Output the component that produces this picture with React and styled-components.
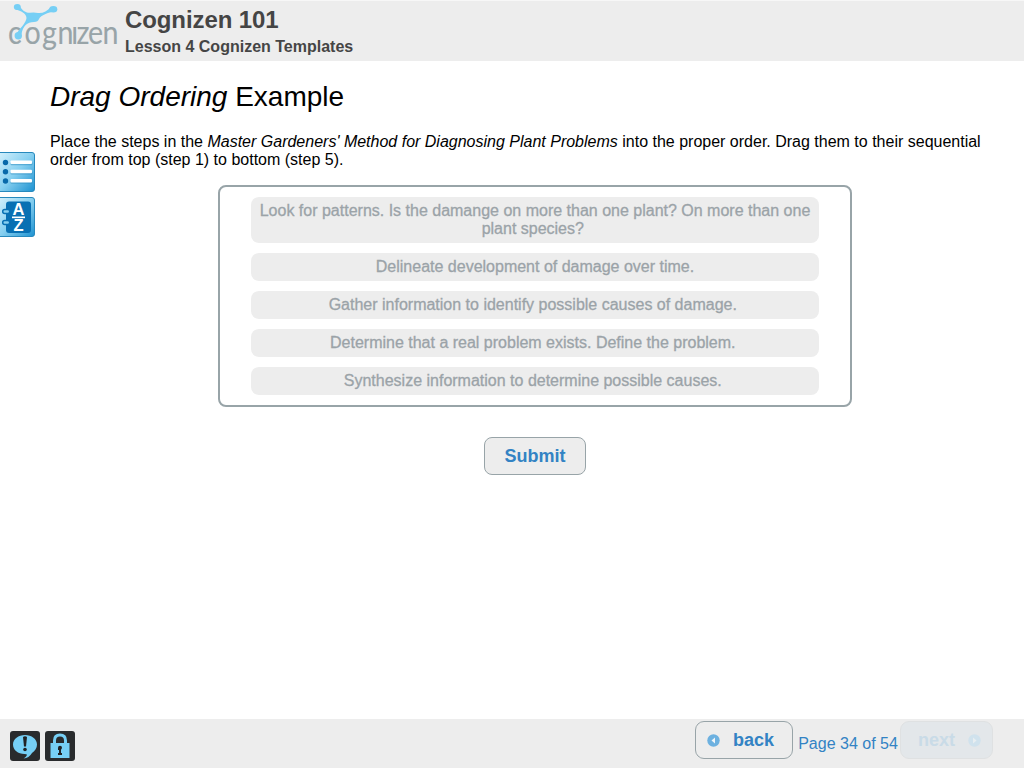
import React from "react";
import styled, { createGlobalStyle, css } from "styled-components";

const GlobalStyle = createGlobalStyle`
  * { box-sizing: border-box; }
  body { margin: 0; background: #fff; font-family: "Liberation Sans", Arial, sans-serif; }
`;

const Page = styled.div`
  width: 1024px;
  height: 768px;
  display: flex;
  flex-direction: column;
  overflow: hidden;
`;

const Header = styled.header`
  height: 61px;
  flex: none;
  display: flex;
  background: #ededed;
  border-top: 1px solid #f7f7f7;
  color: #454545;
`;

const Logo = styled.svg`
  width: 125px;
  height: 60px;
  flex: none;
  display: block;
  overflow: visible;
`;

const CourseTitle = styled.h1`
  margin: 4px 0 0;
  font-size: 24px;
  line-height: 29px;
  letter-spacing: -0.1px;
`;

const LessonTitle = styled.h2`
  margin: 4px 0 0;
  font-size: 16px;
  line-height: 18px;
`;

const Body = styled.div`
  flex: 1;
  display: flex;
  min-height: 0;
`;

const SideTabs = styled.nav`
  width: 50px;
  flex: none;
  padding-top: 91px;
  display: flex;
  flex-direction: column;
  gap: 5px;
`;

const TabIcon = styled.svg`
  width: 36px;
  height: 40px;
  display: block;
`;

const Content = styled.main`
  width: 970px;
  padding-right: 30px;
`;

const PageTitle = styled.h3`
  margin: 19px 0 0;
  font-size: 28px;
  font-weight: 400;
  line-height: 33px;
`;

const Instructions = styled.p`
  margin: 20px 0 0;
  font-size: 16px;
  line-height: 18px;
  white-space: nowrap;
`;

const Exercise = styled.section`
  width: 634px;
  margin: 16px 0 0 168px;
  display: flex;
  flex-direction: column;
  align-items: center;
  gap: 30px;
`;

const OrderList = styled.ul`
  width: 634px;
  height: 222px;
  margin: 0;
  padding: 10px 31px;
  list-style: none;
  display: flex;
  flex-direction: column;
  gap: 10px;
  border: 2px solid #98a4a8;
  border-radius: 8px;
`;

const Step = styled.li`
  padding: 5px 8px;
  border-radius: 8px;
  background: #ededed;
  color: #9ba3a8;
  font-size: 16px;
  line-height: 18px;
  text-align: center;
  white-space: pre;
  -webkit-text-stroke: 0.3px #9ba3a8;
`;

const buttonBase = css`
  height: 38px;
  padding: 0;
  display: flex;
  align-items: center;
  justify-content: center;
  border: 1px solid #98a4a8;
  background: #ededed;
  color: #3383c4;
  font: bold 18px/20px "Liberation Sans", Arial, sans-serif;
`;

const SubmitButton = styled.button`
  ${buttonBase}
  width: 102px;
  border-radius: 8px;
`;

const Footer = styled.footer`
  height: 49px;
  flex: none;
  padding: 2px 31px 0 10px;
  display: flex;
  background: #ededed;
`;

const Tools = styled.div`
  flex: 1;
  display: flex;
  gap: 5px;
  padding-top: 10px;
`;

const ToolIcon = styled.svg`
  width: 30px;
  height: 30px;
`;

const NavButton = styled.button`
  ${buttonBase}
  width: ${(p) => (p.$next ? 93 : 98)}px;
  padding: ${(p) => (p.$next ? "0 0 0 6px" : "0 7px 0 0")};
  gap: 13px;
  border-radius: 9px;
  ${(p) =>
    p.$next &&
    css`
      border-color: #dfe1e2;
      background: #e3e7ea;
      color: #c9dbe7;
    `}
`;

const NavIcon = styled.svg`
  width: 13px;
  height: 13px;
`;

const PageCount = styled.span`
  width: 107px;
  padding: 13px 0 0 3px;
  text-align: center;
  font-size: 16px;
  line-height: 19px;
  color: #3383c4;
  white-space: nowrap;
`;

const steps = [
  "Look for patterns. Is the damange on more than one plant? On more than one\nplant species?\u00a0",
  "Delineate development of damage over time.",
  "Gather information to identify possible causes of damage.\u00a0",
  "Determine that a real problem exists. Define the problem.\u00a0",
  "Synthesize information to determine possible causes.\u00a0",
];

function BrandLogo() {
  return (
    <Logo viewBox="0 1 125 60">
      <text x="9 27.8 47.7 65.4 81 87 100 116.500" y="44" transform="scale(0.88 1)"
        fontFamily="Lato, sans-serif" fontSize="32.500"
        fill="#98a4a8" stroke="#98a4a8" strokeWidth="0.1">cognızen</text>
      <g fill="#76cff5">
        <path d="M18.500 4.500C22 10 25 13 30 12.800Q34 12 38 13C43 13.500 47 11 51 7L54.500 11.500C48 12.500 41 15 39 19Q38 22 34 22C27 22 23 26 21.500 34L17 33C21 27 26 23 26.500 18C26 13 21 11 15.500 9.500Z" />
        <ellipse cx="17.300" cy="7" rx="3.500" ry="3" />
        <ellipse cx="53.300" cy="9.300" rx="4" ry="3.200" />
        <circle cx="18.300" cy="35.700" r="3.700" />
      </g>
    </Logo>
  );
}

function TabPlate({ id }) {
  return (
    <>
      <defs>
        <linearGradient id={id} x1="0" y1="0" x2="1" y2="1">
          <stop offset="0" stopColor="#d2f0fc" />
          <stop offset="0.5" stopColor="#86cff0" />
          <stop offset="1" stopColor="#1c91d0" />
        </linearGradient>
      </defs>
      <path d="M-1 0.5H32Q34.5 0.5 34.5 3V37Q34.5 39.5 32 39.5H-1Z" fill={`url(#${id})`} stroke="#2789bd" />
    </>
  );
}

export default function App() {
  return (
    <>
      <GlobalStyle />
      <Page>
        <Header>
          <BrandLogo />
          <div>
            <CourseTitle>Cognizen 101</CourseTitle>
            <LessonTitle>Lesson 4 Cognizen Templates</LessonTitle>
          </div>
        </Header>
        <Body>
          <SideTabs>
            <TabIcon viewBox="0 0 36 40">
              <TabPlate id="outlinePlate" />
              {[10.5, 19.7, 29].map((y) => (
                <g key={y}>
                  <circle cx="5.5" cy={y} r="2.7" fill="#0869aa" />
                  <rect x="10.5" y={y - 0.5} width="22" height="3.2" rx="1" fill="#2789bd" opacity="0.5" />
                  <rect x="10.5" y={y - 2} width="21.5" height="3.5" rx="1" fill="#fff" />
                </g>
              ))}
            </TabIcon>
            <TabIcon viewBox="0 0 36 40">
              <TabPlate id="glossaryPlate" />
              <path d="M9 4.500H28Q31 4.500 31 7.500V33Q31 36 28 36H9Q6 36 6 33V7.500Q6 4.500 9 4.500Z" fill="#0870b3" />
              {[14.500, 25.500].map((y) => (
                <rect key={y} x="2.700" y={y - 2} width="7" height="4" rx="2" fill="#86cff0" stroke="#0870b3" strokeWidth="1.500" />
              ))}
              <g fill="#fff" fontFamily="Liberation Sans, sans-serif" fontSize="16.500" fontWeight="bold" textAnchor="middle">
                <text x="18.500" y="18">A</text>
                <text x="18.500" y="34">Z</text>
              </g>
              <rect x="12" y="19.500" width="13" height="1.700" fill="#fff" />
            </TabIcon>
          </SideTabs>
          <Content>
            <PageTitle><em>Drag Ordering</em> Example</PageTitle>
            <Instructions>
              Place the steps in the <em>Master Gardeners' Method for Diagnosing Plant Problems</em> into the proper order. Drag them to their sequential<br />
              order from top (step 1) to bottom (step 5).
            </Instructions>
            <Exercise>
              <OrderList>
                {steps.map((s) => <Step key={s}>{s}</Step>)}
              </OrderList>
              <SubmitButton>Submit</SubmitButton>
            </Exercise>
          </Content>
        </Body>
        <Footer>
          <Tools>
            <ToolIcon viewBox="0 0 30 30">
              <rect width="30" height="30" rx="3" fill="#292b2d" />
              <path d="M15 4C8.5 4 3 8 3 13.5C3 19 8 23 14.5 23Q17 23 17 24Q16 26 13.5 27.5Q19 27 22 22C25 20 27 17 27 13.5C27 8 21.500 4 15 4Z" fill="#76cff5" />
              <path d="M13 6Q15 4.500 17 6L16 15.500H14Z" fill="#202224" />
              <circle cx="15" cy="18.500" r="1.800" fill="#202224" />
            </ToolIcon>
            <ToolIcon viewBox="0 0 30 30">
              <rect width="30" height="30" rx="3" fill="#292b2d" />
              <path d="M9.500 14V9.500Q9.500 4 15 4T20.500 9.500V14" fill="none" stroke="#76cff5" strokeWidth="3" />
              <rect x="5.500" y="12" width="19" height="15" fill="#76cff5" />
              <circle cx="15" cy="16.700" r="2" fill="#202224" />
              <path d="M13 17H16V22H17V24H13V22H14V19H13Z" fill="#202224" />
            </ToolIcon>
          </Tools>
          <NavButton>
            <NavIcon viewBox="0 0 13 13">
              <circle cx="6.500" cy="6.500" r="6.200" fill="#6db1e0" />
              <path d="M8 3.500V9.500L4.500 6.500Z" fill="#f2f6f9" />
            </NavIcon>
            back
          </NavButton>
          <PageCount>Page 34 of 54</PageCount>
          <NavButton $next disabled>
            next
            <NavIcon viewBox="0 0 13 13">
              <circle cx="6.500" cy="6.500" r="6.200" fill="#d0e2ed" />
              <path d="M5 3.500V9.500L8.500 6.500Z" fill="#e8eef1" />
            </NavIcon>
          </NavButton>
        </Footer>
      </Page>
    </>
  );
}
